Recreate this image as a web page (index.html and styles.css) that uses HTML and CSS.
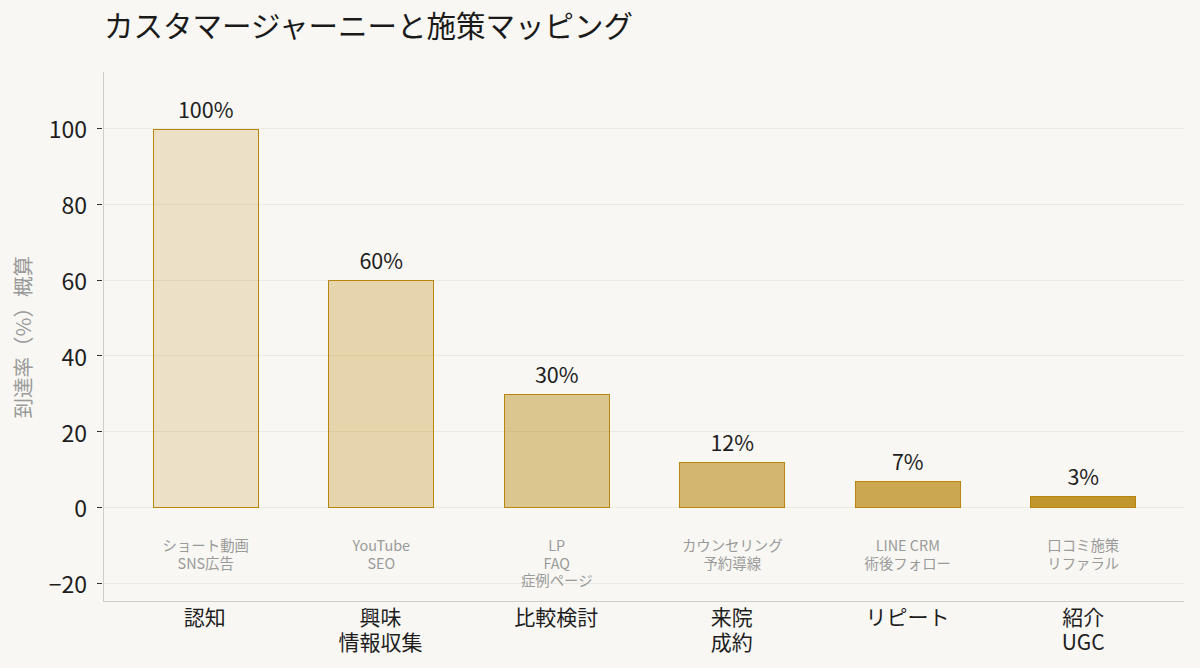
FILE: index.html
```html
<!DOCTYPE html>
<html lang="ja">
<head>
<meta charset="utf-8">
<title>カスタマージャーニーと施策マッピング</title>
<link rel="stylesheet" href="styles.css">
</head>
<body>
<div class="page">
  <h1 class="title">カスタマージャーニーと施策マッピング</h1>
  <div class="chart">
    <div class="yaxis">
      <div class="ylabel"><span class="ylabel-text">到達率（%）概算</span></div>
      <div class="ticks">
        <div class="tick"><span class="tl">100</span><span class="tm"></span></div>
        <div class="tick"><span class="tl">80</span><span class="tm"></span></div>
        <div class="tick"><span class="tl">60</span><span class="tm"></span></div>
        <div class="tick"><span class="tl">40</span><span class="tm"></span></div>
        <div class="tick"><span class="tl">20</span><span class="tm"></span></div>
        <div class="tick"><span class="tl">0</span><span class="tm"></span></div>
        <div class="tick"><span class="tl">−20</span><span class="tm"></span></div>
      </div>
    </div>
    <div class="plot">
      <div class="gridlayer">
        <div class="gl"></div>
        <div class="gl"></div>
        <div class="gl"></div>
        <div class="gl"></div>
        <div class="gl"></div>
        <div class="gl"></div>
        <div class="gl"></div>
      </div>
      <div class="bars">
        <div class="col">
          <div class="upper"><div class="pct">100%</div><div class="bar b1" style="height:379px"></div></div>
          <div class="lower">ショート動画<br>SNS広告</div>
        </div>
        <div class="col">
          <div class="upper"><div class="pct">60%</div><div class="bar b2" style="height:227.4px"></div></div>
          <div class="lower">YouTube<br>SEO</div>
        </div>
        <div class="col">
          <div class="upper"><div class="pct">30%</div><div class="bar b3" style="height:113.7px"></div></div>
          <div class="lower">LP<br>FAQ<br>症例ページ</div>
        </div>
        <div class="col">
          <div class="upper"><div class="pct">12%</div><div class="bar b4" style="height:45.5px"></div></div>
          <div class="lower">カウンセリング<br>予約導線</div>
        </div>
        <div class="col">
          <div class="upper"><div class="pct">7%</div><div class="bar b5" style="height:26.5px"></div></div>
          <div class="lower">LINE CRM<br>術後フォロー</div>
        </div>
        <div class="col">
          <div class="upper"><div class="pct">3%</div><div class="bar b6" style="height:11.4px"></div></div>
          <div class="lower">口コミ施策<br>リファラル</div>
        </div>
      </div>
    </div>
    <div class="corner"></div>
    <div class="xlabels">
      <div class="xl"><span class="ln">認知</span></div>
      <div class="xl"><span class="ln">興味</span><span class="ln">情報収集</span></div>
      <div class="xl"><span class="ln">比較検討</span></div>
      <div class="xl"><span class="ln">来院</span><span class="ln">成約</span></div>
      <div class="xl"><span class="ln">リピート</span></div>
      <div class="xl"><span class="ln">紹介</span><span class="ln">UGC</span></div>
    </div>
  </div>
</div>
</body>
</html>
```

FILE: styles.css
```css
* { box-sizing: border-box; }

html, body {
  margin: 0;
  padding: 0;
  background: #f8f7f3;
}

body {
  font-family: "Noto Sans CJK JP", "Noto Sans", sans-serif;
  color: #1e1e1e;
}

.page {
  width: 1200px;
  height: 668px;
  overflow: hidden;
  background: #f8f7f3;
}

.title {
  margin: 0;
  height: 72px;
  padding: 4px 0 0 104px;
  font-size: 29.5px;
  font-weight: 400;
  line-height: 40px;
  color: #1a1a1a;
  white-space: nowrap;
}

.chart {
  display: grid;
  grid-template-columns: 103px 1081px;
  grid-template-rows: 530px auto;
}

/* ---------- y axis ---------- */
.yaxis {
  display: flex;
  height: 530px;
}

.ylabel {
  width: 44px;
  display: flex;
  align-items: center;
  justify-content: center;
}

.ylabel-text {
  writing-mode: vertical-rl;
  text-orientation: sideways;
  transform: rotate(180deg);
  font-size: 20.5px;
  line-height: 24px;
  color: #9a9a9a;
  white-space: nowrap;
}

.ticks {
  flex: 1;
  display: flex;
  flex-direction: column;
  padding-top: 18.6px;
}

.tick {
  flex: none;
  height: 75.8px;
  display: flex;
  align-items: center;
  justify-content: flex-end;
  gap: 10px;
}

.tl {
  font-size: 23px;
  line-height: 26px;
  color: #1e1e1e;
}

.tm {
  width: 5px;
  height: 1px;
  margin-right: 1px;
  background: #333;
}

/* ---------- plot ---------- */
.plot {
  height: 530px;
  border-left: 1px solid #cfcdc8;
  border-bottom: 1px solid #cfcdc8;
  display: grid;
  overflow: hidden;
}

.gridlayer, .bars {
  grid-area: 1 / 1;
}

.gridlayer {
  display: flex;
  flex-direction: column;
  padding-top: 56px;
}

.gl {
  flex: none;
  height: 75.8px;
  border-top: 1px solid #ebe9e3;
}

.bars {
  display: flex;
  padding: 0 13px 0 14px;
}

.col {
  flex: 1;
  display: flex;
  flex-direction: column;
  align-items: center;
}

.upper {
  height: 435px;
  width: 100%;
  display: flex;
  flex-direction: column;
  justify-content: flex-end;
  align-items: center;
}

.pct {
  font-size: 21.5px;
  line-height: 25px;
  margin-bottom: 8px;
  color: #1e1e1e;
}

.bar {
  width: 106px;
  border: 1.5px solid #b8860b;
  margin-bottom: -0.75px;
}

.b1 { background: rgba(184, 134, 11, 0.19); }
.b2 { background: rgba(184, 134, 11, 0.30); }
.b3 { background: rgba(184, 134, 11, 0.43); }
.b4 { background: rgba(184, 134, 11, 0.57); }
.b5 { background: rgba(184, 134, 11, 0.71); }
.b6 { background: rgba(184, 134, 11, 0.86); }

.lower {
  padding-top: 29px;
  font-size: 14.4px;
  line-height: 17.6px;
  color: #9a9a9a;
  text-align: center;
  white-space: nowrap;
}

/* ---------- x labels ---------- */
.xlabels {
  display: flex;
  padding: 2px 13px 0 14px;
}

.xl {
  flex: 1;
  display: flex;
  flex-direction: column;
  align-items: center;
  font-size: 21px;
  line-height: 25px;
  color: #1e1e1e;
}

.ln {
  display: block;
  height: 25px;
  white-space: nowrap;
}
```
